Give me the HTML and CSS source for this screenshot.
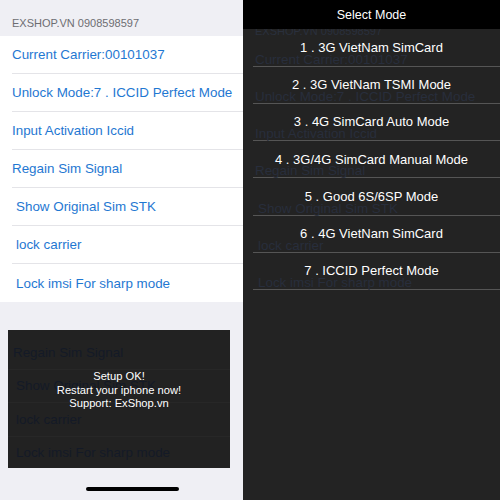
FILE: index.html
```html
<!DOCTYPE html>
<html>
<head>
<meta charset="utf-8">
<link rel="stylesheet" href="styles.css">
</head>
<body>
<div class="page">
  <section class="left">
    <div class="group-header">EXSHOP.VN 0908598597</div>
    <ul class="list">
      <li class="row">Current Carrier:00101037</li>
      <li class="row">Unlock Mode:7 . ICCID Perfect Mode</li>
      <li class="row">Input Activation Iccid</li>
      <li class="row">Regain Sim Signal</li>
      <li class="row indent">Show Original Sim STK</li>
      <li class="row indent">lock carrier</li>
      <li class="row indent">Lock imsi For sharp mode</li>
    </ul>
    <div class="bottom">
      <div class="toast">
        <ul class="toast-ghost">
          <li class="tg-row">Regain Sim Signal</li>
          <li class="tg-row indent">Show Original Sim STK</li>
          <li class="tg-row indent">lock carrier</li>
          <li class="tg-row indent">Lock imsi For sharp mode</li>
        </ul>
        <div class="toast-msg">Setup OK!<br>Restart your iphone now!<br>Support: ExShop.vn</div>
      </div>
      <div class="home-indicator"></div>
    </div>
  </section>
  <section class="right">
    <div class="ghost">
      <div class="ghost-header">EXSHOP.VN 0908598597</div>
      <ul class="ghost-list">
        <li class="g-row">Current Carrier:00101037</li>
        <li class="g-row">Unlock Mode:7 . ICCID Perfect Mode</li>
        <li class="g-row">Input Activation Iccid</li>
        <li class="g-row">Regain Sim Signal</li>
        <li class="g-row indent">Show Original Sim STK</li>
        <li class="g-row indent">lock carrier</li>
        <li class="g-row indent">Lock imsi For sharp mode</li>
      </ul>
    </div>
    <div class="title-bar">Select Mode</div>
    <ul class="menu">
      <li class="item">1 . 3G VietNam SimCard</li>
      <li class="item">2 . 3G VietNam TSMI Mode</li>
      <li class="item">3 . 4G SimCard Auto Mode</li>
      <li class="item">4 . 3G/4G SimCard Manual Mode</li>
      <li class="item">5 . Good 6S/6SP Mode</li>
      <li class="item">6 . 4G VietNam SimCard</li>
      <li class="item">7 . ICCID Perfect Mode</li>
    </ul>
  </section>
</div>
</body>
</html>
```
FILE: styles.css
```css
* { box-sizing: border-box; }
html, body { margin: 0; padding: 0; }
body {
  font-family: "Liberation Sans", Arial, sans-serif;
  background: #232323;
}
ul { list-style: none; margin: 0; padding: 0; }

.page {
  display: flex;
  width: 500px;
  height: 500px;
  overflow: hidden;
}

/* LEFT PANEL */
.left {
  width: 243px;
  flex: none;
  background: #efeff4;
  display: flex;
  flex-direction: column;
}
.group-header {
  height: 36px;
  padding: 17px 0 0 12px;
  font-size: 11px;
  color: #6d6d72;
}
.list {
  background: #fff;
}
.row {
  height: 38px;
  display: flex;
  align-items: center;
  margin-left: 12px;
  font-size: 13.4px;
  color: #1f78d2;
  border-bottom: 1px solid #e4e4e8;
}
.row.indent { padding-left: 4px; }
.row:last-child { border-bottom: none; margin-left: 0; padding-left: 16px; }

.bottom {
  flex: 1;
  position: relative;
}
.toast {
  position: absolute;
  left: 8px;
  top: 28px;
  width: 222px;
  height: 138px;
  background: #222222;
  overflow: hidden;
}
.toast-ghost {
  padding-top: 6px;
}
.tg-row {
  height: 33.5px;
  display: flex;
  align-items: center;
  padding-left: 5px;
  font-size: 13.4px;
  color: #141a27;
  border-bottom: 1px solid #272727;
}
.tg-row.indent { padding-left: 8px; }
.toast-msg {
  position: absolute;
  left: 0;
  right: 0;
  top: 40px;
  text-align: center;
  color: #fff;
  font-size: 11.2px;
  line-height: 13.6px;
}
.home-indicator {
  position: absolute;
  left: 86px;
  top: 185px;
  width: 93px;
  height: 4px;
  border-radius: 2px;
  background: #000;
}

/* RIGHT PANEL */
.right {
  flex: 1;
  position: relative;
  background: #232323;
}
.ghost {
  position: absolute;
  left: 0;
  right: 0;
  top: 0;
}
.ghost-header {
  height: 29px;
  padding: 26px 0 0 12px;
  font-size: 11px;
  color: #2a303d;
  line-height: 11px;
  white-space: nowrap;
}
.g-row {
  height: 37.2px;
  display: flex;
  align-items: flex-end;
  margin-left: 10px;
  padding-left: 2px;
  font-size: 13.4px;
  line-height: 12px;
  color: #282e3c;
  border-bottom: 1px solid #555555;
  white-space: nowrap;
}
.g-row:first-child { height: 37.8px; }
.g-row.indent { padding-left: 5px; }
.title-bar {
  position: relative;
  height: 29px;
  background: #000;
  color: #fff;
  font-size: 12.5px;
  display: flex;
  align-items: center;
  justify-content: center;
}
.menu {
  position: relative;
}
.item {
  height: 37.2px;
  display: flex;
  align-items: center;
  justify-content: center;
  color: #fff;
  font-size: 13px;
}
```
